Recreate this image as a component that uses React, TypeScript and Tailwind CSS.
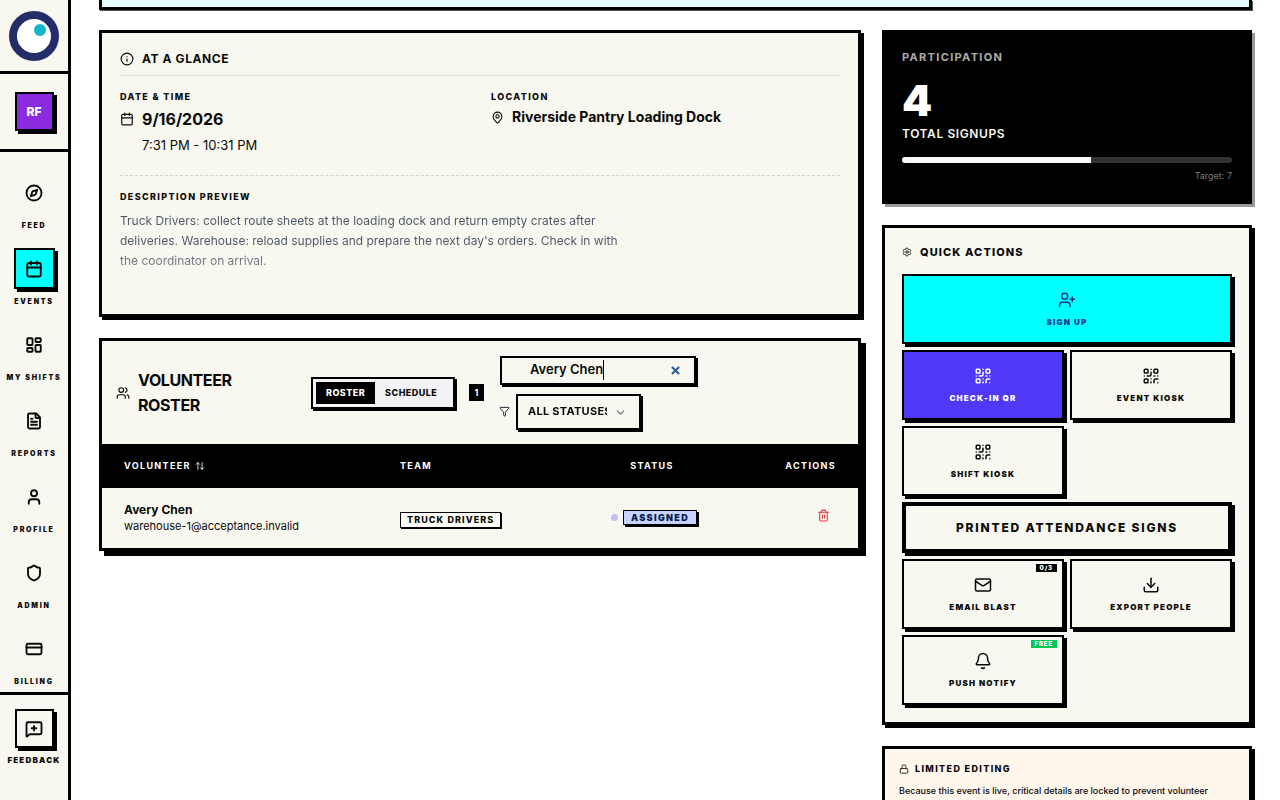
import { useState } from "react";
import type { ReactNode } from "react";
import {
  ArrowUpDown,
  Bell,
  Calendar,
  ChevronDown,
  Compass,
  CreditCard,
  Download,
  FileText,
  Filter,
  Info,
  LayoutDashboard,
  Lock,
  Mail,
  MapPin,
  MessageSquarePlus,
  QrCode,
  Settings,
  Shield,
  Trash2,
  User,
  UserPlus,
  Users,
} from "lucide-react";
import type { LucideIcon } from "lucide-react";

const NAV_ITEMS: { label: string; icon: LucideIcon; active?: boolean }[] = [
  { label: "Feed", icon: Compass },
  { label: "Events", icon: Calendar, active: true },
  { label: "My Shifts", icon: LayoutDashboard },
  { label: "Reports", icon: FileText },
  { label: "Profile", icon: User },
  { label: "Admin", icon: Shield },
  { label: "Billing", icon: CreditCard },
];

const VOLUNTEERS = [
  {
    name: "Avery Chen",
    email: "warehouse-1@acceptance.invalid",
    team: "Truck Drivers",
    status: "Assigned",
  },
];

function Sidebar() {
  return (
    <aside className="flex h-full w-[71px] shrink-0 flex-col border-r-3 border-black bg-[#f8f8f0]">
      <a href="#home" aria-label="Home" className="flex h-[74px] shrink-0 items-center justify-center border-b-3 border-black">
        <svg viewBox="0 0 50 50" className="size-[50px]" aria-hidden="true">
          <circle cx="25" cy="25" r="21" fill="#fff" stroke="#232d69" strokeWidth="8" />
          <circle cx="31" cy="19" r="6" fill="#12b5cb" />
        </svg>
      </a>
      <div className="flex h-[78px] shrink-0 items-center justify-center border-b-3 border-black">
        <button className="size-[39px] border-2 border-black bg-[#8a2be2] text-xs font-extrabold text-white shadow-[3px_3px_0_0_#000]">
          RF
        </button>
      </div>
      <nav className="flex flex-1 flex-col items-center gap-4 overflow-hidden pt-5">
        {NAV_ITEMS.map(({ label, icon: Icon, active }) => (
          <a key={label} href={`#${label}`} className="flex h-15 flex-col items-center gap-2">
            <span
              className={`flex size-[41px] shrink-0 items-center justify-center ${
                active ? "border-2 border-black bg-[#00ffff] shadow-[3px_3px_0_0_#000]" : ""
              }`}
            >
              <Icon size={18} strokeWidth={2.5} />
            </span>
            <span className="text-[7px] leading-[10px] font-black tracking-[0.25em] whitespace-nowrap uppercase">
              {label}
            </span>
          </a>
        ))}
      </nav>
      <div className="flex h-[108px] shrink-0 flex-col items-center gap-[7px] border-t-3 border-black pt-[14px]">
        <button
          aria-label="Send feedback"
          className="flex size-[39px] items-center justify-center border-2 border-black shadow-[3px_3px_0_0_#000]"
        >
          <MessageSquarePlus size={18} strokeWidth={2.5} />
        </button>
        <span className="text-[8px] leading-[10px] font-black tracking-[0.15em] uppercase">Feedback</span>
      </div>
    </aside>
  );
}

function AtAGlance() {
  return (
    <section className="h-[287px] border-3 border-black bg-[#f8f8f0] px-[18px] pt-[18px] shadow-[3px_3px_0_0_#000]">
      <h2 className="flex items-center gap-2 border-b border-black/10 pb-2 text-[12px] leading-4 font-bold tracking-wider uppercase">
        <Info size={14} />
        At a glance
      </h2>
      <div className="grid grid-cols-2 gap-[22px] pt-[15px]">
        <div>
          <h3 className="text-[9px] leading-3 font-extrabold tracking-[0.15em] uppercase">Date &amp; Time</h3>
          <p className="flex items-center gap-2 pt-1 text-base leading-6 font-bold">
            <Calendar size={14} />
            9/16/2026
          </p>
          <p className="pt-1 pl-[22px] text-[13px] leading-5">7:31 PM - 10:31 PM</p>
        </div>
        <div>
          <h3 className="text-[9px] leading-3 font-extrabold tracking-[0.15em] uppercase">Location</h3>
          <p className="flex items-center gap-2 pt-1 text-[14px] leading-5 font-bold">
            <MapPin size={13} />
            Riverside Pantry Loading Dock
          </p>
        </div>
      </div>
      <div className="mt-5 border-t border-dashed border-black/15 pt-[15px]">
        <h3 className="text-[9px] leading-3 font-extrabold tracking-[0.15em] uppercase">Description Preview</h3>
        <p className="max-w-[510px] bg-linear-to-b from-[#4a5565] from-60% to-[#838994] bg-clip-text pt-2 text-[12px] leading-5 text-transparent">
          Truck Drivers: collect route sheets at the loading dock and return empty crates after
          deliveries. Warehouse: reload supplies and prepare the next day&apos;s orders. Check in with
          the coordinator on arrival.
        </p>
      </div>
    </section>
  );
}

function VolunteerRoster() {
  const [view, setView] = useState("roster");
  const [query, setQuery] = useState("Avery Chen");
  const rows = VOLUNTEERS.filter((v) => v.name.toLowerCase().includes(query.toLowerCase()));

  return (
    <section className="border-3 border-black bg-[#f8f8f0] shadow-[5px_5px_0_0_#000]">
      <div className="flex h-[103px] items-center px-[14px]">
        <h2 className="flex w-[195px] items-center gap-2 text-base leading-[25px] font-bold tracking-tight uppercase">
          <Users size={14} className="shrink-0" />
          <span className="w-24">Volunteer Roster</span>
        </h2>
        <div className="flex h-8 w-36 shrink-0 border-2 border-black bg-[#f3f3f5] p-[3px] shadow-[2px_2px_0_0_#000]">
          {["roster", "schedule"].map((name) => (
            <button
              key={name}
              onClick={() => setView(name)}
              className={`px-[10px] text-[9px] font-extrabold tracking-wider uppercase ${
                view === name ? "bg-black text-white" : ""
              }`}
            >
              {name}
            </button>
          ))}
        </div>
        <span className="mr-[15px] ml-[14px] flex h-[17px] w-[15px] shrink-0 items-center justify-center bg-black text-[9px] font-bold text-white">
          {rows.length}
        </span>
        <div className="flex flex-col gap-[9px]">
          <div className="ml-px flex h-[29px] w-[196px] items-center border-2 border-black pr-[14px] pl-7 shadow-[2px_2px_0_0_#000]">
            <div className="relative min-w-0 flex-1 text-[13px] font-semibold">
              <input
                type="text"
                aria-label="Search volunteers"
                autoFocus
                value={query}
                onChange={(e) => setQuery(e.target.value)}
                className="block w-full bg-transparent caret-transparent outline-none"
              />
              {/* steady caret, always after the last character */}
              <span
                aria-hidden="true"
                className="pointer-events-none absolute inset-y-0 left-0 border-r border-black whitespace-pre text-transparent select-none"
              >
                {query}
              </span>
            </div>
            <button aria-label="Clear search" onClick={() => setQuery("")}>
              <svg viewBox="0 0 10 10" className="size-[9px]" stroke="#2f5f9e" strokeWidth="2.4">
                <path d="M1 1l8 8M9 1l-8 8" />
              </svg>
            </button>
          </div>
          <div className="flex items-center gap-[6px]">
            <Filter size={11} className="text-gray-900" />
            <div className="relative">
              <select
                aria-label="Filter by status"
                className="h-9 w-[125px] appearance-none border-2 border-black bg-transparent pr-8 pl-[10px] text-[11px] font-bold tracking-wide uppercase shadow-[2px_2px_0_0_#000]"
              >
                <option>All Statuses</option>
                <option>Assigned</option>
              </select>
              <ChevronDown size={13} className="pointer-events-none absolute top-3 right-[14px] text-gray-500" />
            </div>
          </div>
        </div>
      </div>
      <table className="w-full table-fixed border-collapse">
        <thead>
          <tr className="h-11 bg-black text-[9px] font-black tracking-[0.15em] text-white uppercase">
            <th className="w-[276px] pl-[22px] text-left">
              <button className="inline-flex items-center gap-1 tracking-[0.15em] uppercase">
                Volunteer
                <ArrowUpDown size={10} />
              </button>
            </th>
            <th className="pl-[22px] text-left">Team</th>
            <th className="w-[164px] text-center">Status</th>
            <th className="w-[124px] pr-[22px] text-right">Actions</th>
          </tr>
        </thead>
        <tbody>
          {rows.map((v) => (
            <tr key={v.email} className="h-[60px]">
              <td className="pl-[22px]">
                <p className="text-[12px] leading-4 font-bold">{v.name}</p>
                <p className="text-[11px] leading-4">{v.email}</p>
              </td>
              <td className="pb-[3px] pl-[22px]">
                <span className="inline-block border border-black bg-[#fdfdf8] px-[6px] text-[9px] leading-[14px] font-extrabold tracking-[0.12em] uppercase shadow-[1px_1px_0_0_#000]">
                  {v.team}
                </span>
              </td>
              <td className="pb-px pl-1">
                <div className="flex items-center justify-center gap-[5px]">
                  <span className="size-[7px] rounded-full bg-[#c4bff2]" />
                  <span className="border border-black bg-[#c6d2ff] px-[7px] text-[9px] leading-[13px] font-black tracking-[0.15em] text-[#0c1c4d] uppercase shadow-[2px_2px_0_0_#000]">
                    {v.status}
                  </span>
                </div>
              </td>
              <td className="pr-7 pb-2 text-right">
                <button aria-label={`Remove ${v.name}`} className="align-middle text-[#e03a3e]">
                  <Trash2 size={13} />
                </button>
              </td>
            </tr>
          ))}
        </tbody>
      </table>
    </section>
  );
}

function Participation() {
  const total = 4;
  const target = 7;

  return (
    <section className="h-[174px] bg-black px-5 pt-[19px] text-[#f8f8f0] shadow-[3px_3px_0_0_#999]">
      <h2 className="text-[11px] leading-4 font-bold tracking-[0.12em] text-[#acaca7] uppercase">Participation</h2>
      <p className="pt-[15px] text-[43px] leading-[40px] font-black text-white">{total}</p>
      <p className="pt-1 text-[12px] leading-5 font-semibold tracking-wider uppercase">Total Signups</p>
      <div className="mt-[13px] h-[6px] overflow-hidden rounded-full bg-[#333]">
        <div className="h-full bg-[#f8f8f8]" style={{ width: `${(total / target) * 100}%` }} />
      </div>
      <p className="pt-[7px] text-right text-[9px] leading-3 text-[#7c7c78]">Target: {target}</p>
    </section>
  );
}

interface ActionButtonProps {
  label: string;
  icon: LucideIcon;
  className?: string;
  badge?: ReactNode;
}

function ActionButton({ label, icon: Icon, className = "", badge }: ActionButtonProps) {
  return (
    <button
      className={`relative flex h-[70px] flex-col items-center justify-center gap-[7px] border-2 border-black shadow-[3px_3px_0_0_#000] ${className}`}
    >
      <Icon size={18} />
      <span className="text-[8px] leading-3 font-black tracking-[0.15em] uppercase">{label}</span>
      {badge}
    </button>
  );
}

function QuickActions() {
  return (
    <section className="border-3 border-black bg-[#f8f8f0] px-[17px] pt-4 pb-[17px] shadow-[3px_3px_0_0_#000]">
      <h2 className="flex items-center gap-2 text-[11px] leading-4 font-extrabold tracking-widest uppercase">
        <Settings size={10} />
        Quick Actions
      </h2>
      <div className="grid grid-cols-2 gap-[6px] pt-[14px]">
        <ActionButton label="Sign Up" icon={UserPlus} className="col-span-2 bg-[#00ffff] text-[#1c398e]" />
        <ActionButton label="Check-in QR" icon={QrCode} className="bg-[#4f39f6] text-white" />
        <ActionButton label="Event Kiosk" icon={QrCode} />
        <ActionButton label="Shift Kiosk" icon={QrCode} />
        <button className="col-span-2 h-[51px] border-4 border-black text-[12px] font-extrabold tracking-[0.15em] uppercase shadow-[3px_3px_0_0_#000]">
          Printed Attendance Signs
        </button>
        <ActionButton
          label="Email Blast"
          icon={Mail}
          badge={
            <span className="absolute top-[3px] right-[5px] bg-black px-1 text-[6px] leading-[8px] font-black tracking-[0.15em] text-white">
              0/3
            </span>
          }
        />
        <ActionButton label="Export People" icon={Download} />
        <ActionButton
          label="Push Notify"
          icon={Bell}
          badge={
            <span className="absolute top-[3px] right-[5px] bg-[#00c758] px-1 text-[6px] leading-[8px] font-black tracking-[0.15em] text-white">
              FREE
            </span>
          }
        />
      </div>
    </section>
  );
}

function LimitedEditing() {
  return (
    <section className="border-3 border-black bg-[#fff6ec] px-[14px] pt-3 pb-4 shadow-[3px_3px_0_0_#000]">
      <h2 className="flex items-center gap-[6px] text-[9px] leading-4 font-extrabold tracking-[0.15em] uppercase">
        <Lock size={10} />
        Limited Editing
      </h2>
      <p className="pt-[6px] text-[9px] leading-[15px] font-medium">
        Because this event is live, critical details are locked to prevent volunteer
      </p>
    </section>
  );
}

export default function App() {
  return (
    <div className="flex h-screen overflow-hidden bg-white font-[Inter,sans-serif] text-[#0a0a0a]">
      <Sidebar />
      <main className="min-w-0 flex-1 overflow-y-auto pr-7 pl-7 [scrollbar-width:none]">
        <div className="h-[10px] border-3 border-t-0 border-black bg-[#e6ffff] shadow-[1px_1px_0_0_#555]" />
        <div className="flex items-start gap-[21px] pt-5 pb-6">
          <div className="flex min-w-0 flex-1 flex-col gap-[21px]">
            <AtAGlance />
            <VolunteerRoster />
          </div>
          <div className="flex w-[370px] shrink-0 flex-col gap-[21px]">
            <Participation />
            <QuickActions />
            <LimitedEditing />
          </div>
        </div>
      </main>
    </div>
  );
}
